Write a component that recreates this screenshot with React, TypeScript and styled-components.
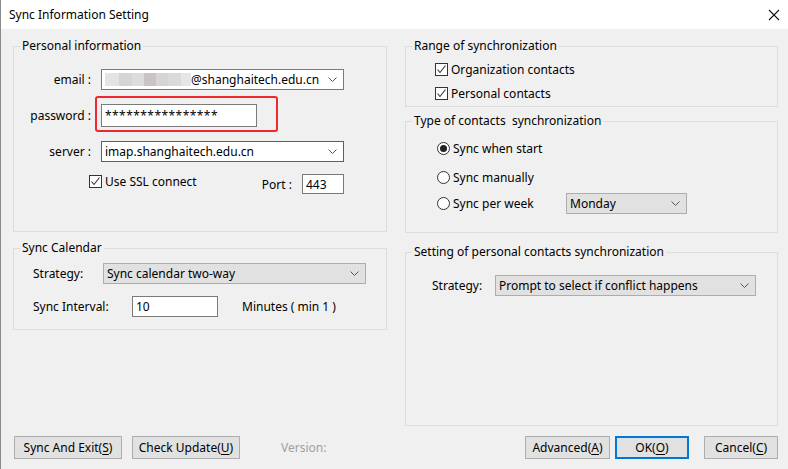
import React from 'react';
import styled, { createGlobalStyle } from 'styled-components';

const Global = createGlobalStyle`
  html, body { margin: 0; padding: 0; background: #f0f0f0; }
  body {
    font-family: "Noto Sans", "Liberation Sans", Arial, sans-serif;
    font-size: 12px;
    color: #000;
  }
  * { box-sizing: border-box; }
`;

const Window = styled.div`
  width: 788px;
  height: 469px;
  display: flex;
  flex-direction: column;
  border-left: 1px solid #8a8a8a;
  background: #f0f0f0;
  overflow: hidden;
`;

const TitleBar = styled.div`
  height: 29px;
  flex-shrink: 0;
  background: #fff;
  display: flex;
  align-items: center;
  justify-content: space-between;
  padding: 0 8px 0 8px;
`;

const TitleText = styled.span`
  font-size: 12px;
  line-height: 16px;
`;

const Body = styled.div`
  flex: 1;
  display: flex;
  flex-direction: column;
  padding: 9px 10px 0 12px;
`;

const Columns = styled.div`
  display: flex;
  gap: 18px;
`;

const Column = styled.div<{ $w: number }>`
  width: ${(p) => p.$w}px;
  display: flex;
  flex-direction: column;
`;

const Group = styled.fieldset<{ $h: number; $mt?: number }>`
  margin: ${(p) => p.$mt ?? 0}px 0 0 0;
  padding: 0;
  min-width: 0;
  height: ${(p) => p.$h}px;
  border: 1px solid #dcdcdc;
`;

const Legend = styled.legend`
  margin-left: 6px;
  padding: 0 2px;
  font-size: 12px;
  line-height: 16px;
`;

const GroupBody = styled.div<{ $pl: number; $pr?: number }>`
  padding-left: ${(p) => p.$pl}px;
  padding-right: ${(p) => p.$pr ?? 0}px;
  display: flex;
  flex-direction: column;
`;

const Row = styled.div<{ $mt: number; $h: number; $top?: boolean }>`
  display: flex;
  align-items: ${(p) => (p.$top ? 'flex-start' : 'center')};
  margin-top: ${(p) => p.$mt}px;
  height: ${(p) => p.$h}px;
`;

const FieldLabel = styled.span<{ $w: number; $right?: boolean }>`
  width: ${(p) => p.$w}px;
  flex-shrink: 0;
  white-space: nowrap;
  text-align: ${(p) => (p.$right ? 'right' : 'left')};
`;

const Combo = styled.div<{ $w: number; $h: number; $kind: 'edit' | 'list' | 'focus'; $ml?: number }>`
  width: ${(p) => p.$w}px;
  height: ${(p) => p.$h}px;
  margin-left: ${(p) => p.$ml ?? 0}px;
  flex-shrink: 0;
  display: flex;
  align-items: center;
  padding: 0 6px 0 3px;
  white-space: nowrap;
  background: ${(p) => (p.$kind === 'list' ? '#e1e1e1' : '#fff')};
  border: 1px solid
    ${(p) => (p.$kind === 'list' ? '#adadad' : p.$kind === 'focus' ? '#0078d7' : '#7a7a7a')};
`;

const ComboText = styled.span`
  flex: 1;
  display: flex;
  align-items: center;
  overflow: hidden;
`;

const Blur = styled.span<{ $w: number; $c: string }>`
  display: inline-block;
  width: ${(p) => p.$w}px;
  height: 13px;
  background: ${(p) => p.$c};
`;

const TextBox = styled.div<{ $w: number; $h: number; $ml?: number; $ls?: number }>`
  width: ${(p) => p.$w}px;
  height: ${(p) => p.$h}px;
  margin-left: ${(p) => p.$ml ?? 0}px;
  flex-shrink: 0;
  display: flex;
  align-items: center;
  padding-left: 3px;
  letter-spacing: ${(p) => p.$ls ?? 0}px;
  background: #fff;
  border: 1px solid #7a7a7a;
  white-space: nowrap;
`;

const Highlight = styled.div`
  position: relative;
  margin-left: 10px;
  &::after {
    content: '';
    position: absolute;
    left: -6px;
    top: -8px;
    right: -21px;
    bottom: -5px;
    border: 2px solid #f0282d;
    border-radius: 3px;
    pointer-events: none;
  }
`;

const CheckLabel = styled.label<{ $ml?: number }>`
  display: flex;
  align-items: center;
  gap: 3px;
  height: 15px;
  margin-left: ${(p) => p.$ml ?? 0}px;
  white-space: nowrap;
`;

const Box = styled.span`
  width: 13px;
  height: 13px;
  flex-shrink: 0;
  border: 1px solid #333;
  background: #fff;
  display: flex;
  align-items: center;
  justify-content: center;
`;

const RadioCircle = styled.span`
  width: 13px;
  height: 13px;
  flex-shrink: 0;
  border: 1px solid #333;
  border-radius: 50%;
  background: #fff;
  display: flex;
  align-items: center;
  justify-content: center;
`;

const RadioDot = styled.span`
  width: 7px;
  height: 7px;
  border-radius: 50%;
  background: #222;
`;

const RadioLabel = styled.label<{ $w?: number }>`
  display: flex;
  align-items: center;
  gap: 3px;
  width: ${(p) => (p.$w ? `${p.$w}px` : 'auto')};
  flex-shrink: 0;
  white-space: nowrap;
`;

const PortGroup = styled.div`
  margin-left: auto;
  display: flex;
  align-items: center;
`;

const Plain = styled.span<{ $ml?: number }>`
  margin-left: ${(p) => p.$ml ?? 0}px;
  white-space: nowrap;
`;

const ButtonBar = styled.div`
  display: flex;
  align-items: center;
  margin-top: 10px;
  padding-left: 1px;
`;

const Button = styled.button<{ $w: number; $ml?: number; $primary?: boolean }>`
  width: ${(p) => p.$w}px;
  height: 23px;
  margin-left: ${(p) => p.$ml ?? 0}px;
  padding: 0;
  font: inherit;
  color: #000;
  background: #e1e1e1;
  border: ${(p) => (p.$primary ? '2px solid #0078d7' : '1px solid #adadad')};
  white-space: nowrap;
`;

const Spacer = styled.div`
  flex: 1;
`;

const Version = styled.span`
  margin-left: 41px;
  color: #a0a0a0;
`;

const Mn = styled.span`
  text-decoration: underline;
  text-underline-offset: 2px;
`;

const Chevron = () => (
  <svg width="9" height="5" viewBox="0 0 9 5" style={{ flexShrink: 0 }}>
    <polyline points="0.5,0.5 4.5,4.5 8.5,0.5" fill="none" stroke="#555" strokeWidth="1" />
  </svg>
);

const Check = () => (
  <Box>
    <svg width="11" height="11" viewBox="0 0 11 11">
      <polyline points="1.5,5.5 4,8.5 9.5,1.5" fill="none" stroke="#333" strokeWidth="1.1" />
    </svg>
  </Box>
);

const Radio = ({ on }: { on?: boolean }) => <RadioCircle>{on && <RadioDot />}</RadioCircle>;

const CloseIcon = () => (
  <svg width="12" height="12" viewBox="0 0 12 12">
    <path d="M1 1 L11 11 M11 1 L1 11" stroke="#111" strokeWidth="1.1" fill="none" />
  </svg>
);

const blurBlocks: [number, string][] = [
  [14, '#e4e4e4'],
  [13, '#d8d3d7'],
  [12, '#dcdcdc'],
  [12, '#cac2c9'],
  [12, '#d5d5d5'],
  [13, '#dadada'],
  [10, '#e6e6e6'],
];

export default function App() {
  return (
    <>
      <Global />
      <Window>
        <TitleBar>
          <TitleText>Sync Information Setting</TitleText>
          <CloseIcon />
        </TitleBar>
        <Body>
          <Columns>
            <Column $w={374}>
              <Group $h={194}>
                <Legend>Personal information</Legend>
                <GroupBody $pl={0} $pr={42}>
                  <Row $mt={15} $h={21}>
                    <FieldLabel $w={77} $right>email :</FieldLabel>
                    <Combo $w={243} $h={21} $kind="edit" $ml={10}>
                      <ComboText>
                        {blurBlocks.map(([w, c], i) => (
                          <Blur key={i} $w={w} $c={c} />
                        ))}
                        @shanghaitech.edu.cn
                      </ComboText>
                      <Chevron />
                    </Combo>
                  </Row>
                  <Row $mt={14} $h={23}>
                    <FieldLabel $w={77} $right>password :</FieldLabel>
                    <Highlight>
                      <TextBox $w={156} $h={23} $ls={0.45}>****************</TextBox>
                    </Highlight>
                  </Row>
                  <Row $mt={14} $h={21}>
                    <FieldLabel $w={77} $right>server :</FieldLabel>
                    <Combo $w={243} $h={21} $kind="focus" $ml={10}>
                      <ComboText>imap.shanghaitech.edu.cn</ComboText>
                      <Chevron />
                    </Combo>
                  </Row>
                  <Row $mt={12} $h={21} $top>
                    <CheckLabel $ml={75}>
                      <Check />
                      Use SSL connect
                    </CheckLabel>
                    <PortGroup>
                      <Plain>Port :</Plain>
                      <TextBox $w={42} $h={20} $ml={10}>443</TextBox>
                    </PortGroup>
                  </Row>
                </GroupBody>
              </Group>
              <Group $h={90} $mt={8}>
                <Legend>Sync Calendar</Legend>
                <GroupBody $pl={19}>
                  <Row $mt={7} $h={21}>
                    <FieldLabel $w={70}>Strategy:</FieldLabel>
                    <Combo $w={263} $h={21} $kind="list">
                      <ComboText>Sync calendar two-way</ComboText>
                      <Chevron />
                    </Combo>
                  </Row>
                  <Row $mt={12} $h={21}>
                    <FieldLabel $w={99}>Sync Interval:</FieldLabel>
                    <TextBox $w={86} $h={21}>10</TextBox>
                    <Plain $ml={24}>Minutes ( min 1 )</Plain>
                  </Row>
                </GroupBody>
              </Group>
            </Column>
            <Column $w={373}>
              <Group $h={69}>
                <Legend>Range of synchronization</Legend>
                <GroupBody $pl={29}>
                  <Row $mt={7} $h={16}>
                    <CheckLabel>
                      <Check />
                      Organization contacts
                    </CheckLabel>
                  </Row>
                  <Row $mt={8} $h={16}>
                    <CheckLabel>
                      <Check />
                      Personal contacts
                    </CheckLabel>
                  </Row>
                </GroupBody>
              </Group>
              <Group $h={120} $mt={6}>
                <Legend>Type of contacts&nbsp; synchronization</Legend>
                <GroupBody $pl={31}>
                  <Row $mt={11} $h={16}>
                    <RadioLabel>
                      <Radio on />
                      Sync when start
                    </RadioLabel>
                  </Row>
                  <Row $mt={13} $h={16}>
                    <RadioLabel>
                      <Radio />
                      Sync manually
                    </RadioLabel>
                  </Row>
                  <Row $mt={8} $h={21}>
                    <RadioLabel $w={129}>
                      <Radio />
                      Sync per week
                    </RadioLabel>
                    <Combo $w={121} $h={21} $kind="list">
                      <ComboText>Monday</ComboText>
                      <Chevron />
                    </Combo>
                  </Row>
                </GroupBody>
              </Group>
              <Group $h={182} $mt={11}>
                <Legend>Setting of personal contacts synchronization</Legend>
                <GroupBody $pl={26}>
                  <Row $mt={15} $h={21}>
                    <FieldLabel $w={63}>Strategy:</FieldLabel>
                    <Combo $w={261} $h={21} $kind="list">
                      <ComboText>Prompt to select if conflict happens</ComboText>
                      <Chevron />
                    </Combo>
                  </Row>
                </GroupBody>
              </Group>
            </Column>
          </Columns>
          <ButtonBar>
            <Button $w={108}>
              Sync And Exit(<Mn>S</Mn>)
            </Button>
            <Button $w={108} $ml={10}>
              Check Update(<Mn>U</Mn>)
            </Button>
            <Version>Version:</Version>
            <Spacer />
            <Button $w={85}>
              Advanced(<Mn>A</Mn>)
            </Button>
            <Button $w={74} $ml={5} $primary>
              OK(<Mn>O</Mn>)
            </Button>
            <Button $w={74} $ml={15}>
              Cancel(<Mn>C</Mn>)
            </Button>
          </ButtonBar>
        </Body>
      </Window>
    </>
  );
}
